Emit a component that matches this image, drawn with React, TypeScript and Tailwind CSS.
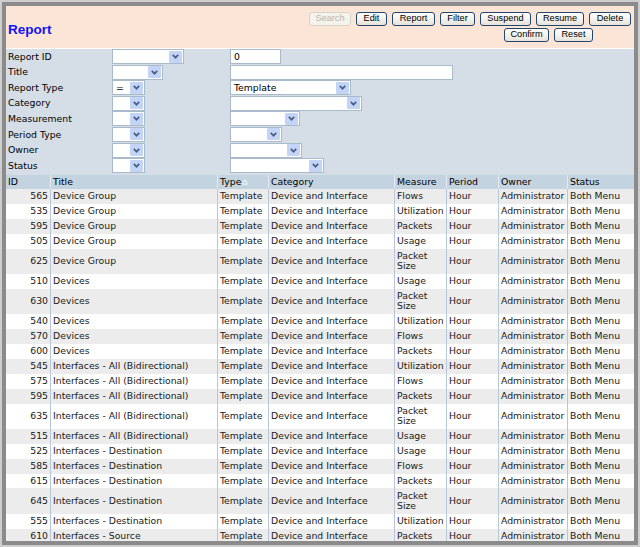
import React from "react";

type Row = [number, string, string];

const rows: Row[] = [
  [565, "Device Group", "Flows"],
  [535, "Device Group", "Utilization"],
  [595, "Device Group", "Packets"],
  [505, "Device Group", "Usage"],
  [625, "Device Group", "Packet Size"],
  [510, "Devices", "Usage"],
  [630, "Devices", "Packet Size"],
  [540, "Devices", "Utilization"],
  [570, "Devices", "Flows"],
  [600, "Devices", "Packets"],
  [545, "Interfaces - All (Bidirectional)", "Utilization"],
  [575, "Interfaces - All (Bidirectional)", "Flows"],
  [595, "Interfaces - All (Bidirectional)", "Packets"],
  [635, "Interfaces - All (Bidirectional)", "Packet Size"],
  [515, "Interfaces - All (Bidirectional)", "Usage"],
  [525, "Interfaces - Destination", "Usage"],
  [585, "Interfaces - Destination", "Flows"],
  [615, "Interfaces - Destination", "Packets"],
  [645, "Interfaces - Destination", "Packet Size"],
  [555, "Interfaces - Destination", "Utilization"],
  [610, "Interfaces - Source", "Packets"],
];

const cols = "grid grid-cols-[44px_167px_51px_126px_52px_52px_69px_66px]";

function Chevron() {
  return (
    <svg width="7" height="5" viewBox="0 0 7 5">
      <path d="M0.8 0.9 L3.5 3.7 L6.2 0.9" fill="none" stroke="#4a5f88" strokeWidth="1.7" />
    </svg>
  );
}

function Select({ w, value }: { w: string; value?: string }) {
  return (
    <div className={`flex h-[15px] items-center justify-between border border-[#a9bacb] bg-white pl-[3px] pr-px ${w}`}>
      <span className="leading-none">{value}</span>
      <span className="flex h-[12px] w-[13px] items-center justify-center rounded-[1px] bg-[#c4d4f6]">
        <Chevron />
      </span>
    </div>
  );
}

function Input({ w, value }: { w: string; value?: string }) {
  return (
    <div className={`flex h-[15px] items-center border border-[#a9bacb] bg-white pl-[3px] ${w}`}>
      <span className="leading-none">{value}</span>
    </div>
  );
}

function Btn({ label, w, disabled = false }: { label: string; w: string; disabled?: boolean }) {
  return (
    <div
      className={`flex h-[14px] items-center justify-center rounded-[3px] border leading-none ${
        disabled
          ? "border-[#d6d4c8] bg-[#f4f3ec] text-[#b9b7a8]"
          : "border-[#24466c] bg-linear-to-b from-white to-[#e6e4da] text-black"
      } ${w}`}
    >
      {label}
    </div>
  );
}

function Cell({ children, right = false, first = false }: { children: React.ReactNode; right?: boolean; first?: boolean }) {
  return (
    <div
      className={`flex items-center px-[2px] py-[2.25px] ${right ? "justify-end" : ""} ${
        first ? "" : "border-l border-[#b7c7d6]"
      }`}
    >
      <span className="leading-[10.4px]">{children}</span>
    </div>
  );
}

export default function App() {
  return (
    <div className="h-[547px] w-[640px] bg-[#cecece] p-[2px]">
      <div
        className="flex h-full flex-col overflow-hidden border-4 border-[#8b8b8b] bg-white text-[9.3px] text-[#1a1a1a]"
        style={{ fontFamily: '"DejaVu Sans", Verdana, sans-serif' }}
      >
        {/* Header */}
        <div className="flex h-[42px] shrink-0 justify-between bg-[#fbe5d6] pl-[2px] pr-[3px]">
          <div
            className="pt-[14px] text-[13.5px] font-bold text-[#1212f4]"
            style={{ fontFamily: '"Liberation Sans", Arial, sans-serif' }}
          >
            Report
          </div>
          <div
            className="flex flex-col items-end gap-[2px] pt-[6px] text-[9.2px]"
            style={{ fontFamily: '"Liberation Sans", Tahoma, sans-serif' }}
          >
            <div className="flex gap-[5px]">
              <Btn label="Search" w="w-[42px]" disabled />
              <Btn label="Edit" w="w-[31px]" />
              <Btn label="Report" w="w-[43px]" />
              <Btn label="Filter" w="w-[35px]" />
              <Btn label="Suspend" w="w-[51px]" />
              <Btn label="Resume" w="w-[48px]" />
              <Btn label="Delete" w="w-[42px]" />
            </div>
            <div className="mr-[38px] flex gap-[5px]">
              <Btn label="Confirm" w="w-[45px]" />
              <Btn label="Reset" w="w-[39px]" />
            </div>
          </div>
        </div>

        {/* Filter */}
        <div className="mt-px shrink-0 bg-[#d5dde6] pb-[1.2px] pl-[2px] text-black">
          {[
            ["Report ID", <Select w="w-[72px]" />, <Input w="w-[51px]" value="0" />],
            ["Title", <Select w="w-[51px]" />, <Input w="w-[223px]" />],
            ["Report Type", <Select w="w-[33px]" value="=" />, <Select w="w-[121px]" value="Template" />],
            ["Category", <Select w="w-[33px]" />, <Select w="w-[132px]" />],
            ["Measurement", <Select w="w-[33px]" />, <Select w="w-[70px]" />],
            ["Period Type", <Select w="w-[33px]" />, <Select w="w-[52px]" />],
            ["Owner", <Select w="w-[33px]" />, <Select w="w-[72px]" />],
            ["Status", <Select w="w-[33px]" />, <Select w="w-[94px]" />],
          ].map(([label, a, b], i) => (
            <div key={i} className="grid h-[15.6px] grid-cols-[104px_118px_1fr] items-start">
              <div className="flex h-[15px] items-center">{label}</div>
              <div>{a}</div>
              <div>{b}</div>
            </div>
          ))}
        </div>

        {/* Table header */}
        <div className={`${cols} h-[14px] shrink-0 bg-[#c4d3e0] text-black`}>
          {["ID", "Title", "Type", "Category", "Measure", "Period", "Owner", "Status"].map((h, i) => (
            <div
              key={h}
              className={`flex items-center px-[2px] ${i === 0 ? "" : "border-l border-[#e3eaf1]"}`}
            >
              {h}
              {h === "Type" && (
                <svg width="6" height="6" viewBox="0 0 6 6" className="ml-px">
                  <path d="M3 0.8 L5.4 5.2 L0.6 5.2 Z" fill="none" stroke="#f4f7fa" strokeWidth="1" />
                </svg>
              )}
            </div>
          ))}
        </div>

        {/* Table body */}
        <div>
          {rows.map(([id, title, measure], i) => (
            <div key={i} className={`${cols} ${i % 2 === 0 ? "bg-[#ececec]" : "bg-white"}`}>
              <Cell right first>{id}</Cell>
              <Cell>{title}</Cell>
              <Cell>Template</Cell>
              <Cell>Device and Interface</Cell>
              <Cell>
                {measure === "Packet Size" ? (
                  <>
                    Packet
                    <br />
                    Size
                  </>
                ) : (
                  measure
                )}
              </Cell>
              <Cell>Hour</Cell>
              <Cell>Administrator</Cell>
              <Cell>Both Menu</Cell>
            </div>
          ))}
        </div>
      </div>
    </div>
  );
}
